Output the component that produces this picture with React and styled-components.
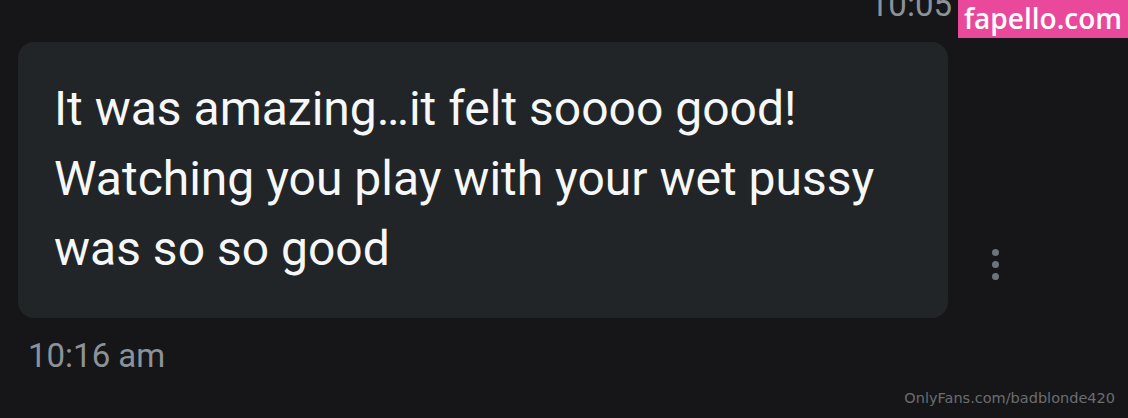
import React from 'react'
import styled, { createGlobalStyle } from 'styled-components'

const Global = createGlobalStyle`
  html, body { margin: 0; padding: 0; background: #161618; }
  body { width: 1128px; height: 418px; overflow: hidden; }
`

const Screen = styled.div`
  position: relative;
  width: 1128px;
  height: 418px;
  background: #161618;
  font-family: Roboto, "Noto Sans", sans-serif;
  display: flex;
  flex-direction: column;
  overflow: hidden;
`

const TopRow = styled.div`
  height: 42px;
  display: flex;
  justify-content: flex-end;
  padding-right: 176px;
`

const SentTime = styled.span`
  font-size: 33px;
  line-height: 32px;
  margin-top: -11px;
  color: #8b9299;
`

const MessageRow = styled.div`
  display: flex;
  align-items: flex-end;
  padding-left: 18px;
`

const Bubble = styled.div`
  width: 930px;
  height: 276px;
  box-sizing: border-box;
  padding: 32px 30px 34px 36px;
  background: #222527;
  border-radius: 16px;
  color: #f6f7f8;
  font-size: 48px;
  line-height: 70px;
  white-space: nowrap;
`

const MoreButton = styled.div`
  margin-left: 44px;
  margin-bottom: 38px;
  display: flex;
  flex-direction: column;
  gap: 5px;
  span {
    width: 7px;
    height: 7px;
    border-radius: 50%;
    background: #6e747b;
  }
`

const ReceivedTime = styled.div`
  padding: 22px 0 0 28px;
  font-size: 33px;
  line-height: 32px;
  color: #8b9299;
`

const Badge = styled.div`
  position: absolute;
  top: 0;
  right: 0;
  width: 170px;
  height: 38px;
  background: #e9489b;
  color: #fff;
  font-family: "Open Sans", "Noto Sans", sans-serif;
  font-weight: 600;
  font-size: 28px;
  line-height: 36px;
  text-align: center;
`

const Watermark = styled.div`
  position: absolute;
  right: 13px;
  bottom: 12px;
  font-family: "DejaVu Sans", sans-serif;
  font-size: 14.5px;
  color: #6a6d71;
`

export default function App() {
  return (
    <Screen>
      <Global />
      <TopRow>
        <SentTime>10:05</SentTime>
      </TopRow>
      <MessageRow>
        <Bubble>
          It was amazing…it felt soooo good!
          <br />
          Watching you play with your wet pussy
          <br />
          was so so good
        </Bubble>
        <MoreButton>
          <span />
          <span />
          <span />
        </MoreButton>
      </MessageRow>
      <ReceivedTime>10:16 am</ReceivedTime>
      <Badge>fapello.com</Badge>
      <Watermark>OnlyFans.com/badblonde420</Watermark>
    </Screen>
  )
}
